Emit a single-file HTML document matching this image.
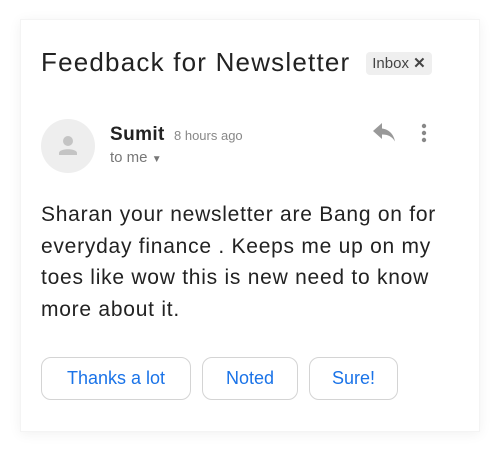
<!DOCTYPE html>
<html><head><style>
body{margin:0;width:500px;height:452px;background:#fff;font-family:"Liberation Sans",sans-serif;position:relative;overflow:hidden}
.card{position:absolute;left:20px;top:19px;width:460px;height:413px;background:#fff;box-shadow:0 2px 12px rgba(0,0,0,0.06);border:1px solid #f4f4f4;box-sizing:border-box}
.abs{position:absolute;white-space:nowrap}
.title{left:41px;top:47px;font-size:26px;color:#222;letter-spacing:1.2px}
.badge{left:366px;top:52px;width:66px;height:23px;background:#efefef;border-radius:4px;font-size:15px;color:#444;line-height:23px;text-align:center}
.av{left:41px;top:119px;width:54px;height:54px;border-radius:50%;background:#eee}
.name{left:110px;top:124px;font-size:19px;font-weight:bold;color:#222;letter-spacing:0.4px}
.time{left:174px;top:128px;font-size:13px;color:#888}
.tome{left:110px;top:149px;font-size:15px;color:#777}
.body{left:41px;top:199px;font-size:21px;line-height:31.5px;color:#222;letter-spacing:0.75px}
.btn{top:357px;height:43px;border:1px solid #d4d4d4;border-radius:10px;box-sizing:border-box;color:#1a73e8;font-size:18px;line-height:41px;text-align:center}
</style></head><body>
<div class="card"></div>
<div class="abs title">Feedback for Newsletter</div>
<div class="abs badge">Inbox <b>✕</b></div>
<div class="abs av"><svg width="54" height="54" viewBox="0 0 54 54"><circle cx="27" cy="22" r="5" fill="#c4c4c4"/><path d="M18 34c0-5 18-5 18 0v2H18z" fill="#c4c4c4"/></svg></div>
<div class="abs name">Sumit</div>
<div class="abs time">8 hours ago</div>
<div class="abs tome">to me <span style="font-size:10px">▼</span></div>
<svg class="abs" style="left:372px;top:123px" width="24" height="20" viewBox="0 0 24 20"><path d="M10 4V0L1 8l9 8v-4.5c6 0 10 2 13 7-1-6-5-12-13-13z" fill="#999"/></svg>
<svg class="abs" style="left:420px;top:123px" width="8" height="20" viewBox="0 0 8 20"><circle cx="4" cy="3" r="2.2" fill="#888"/><circle cx="4" cy="10" r="2.2" fill="#888"/><circle cx="4" cy="17" r="2.2" fill="#888"/></svg>
<div class="abs body">Sharan your newsletter are Bang on for<br>everyday finance . Keeps me up on my<br>toes like wow this is new need to know<br>more about it.</div>
<div class="abs btn" style="left:41px;width:150px">Thanks a lot</div>
<div class="abs btn" style="left:202px;width:96px">Noted</div>
<div class="abs btn" style="left:309px;width:89px">Sure!</div>
</body></html>
